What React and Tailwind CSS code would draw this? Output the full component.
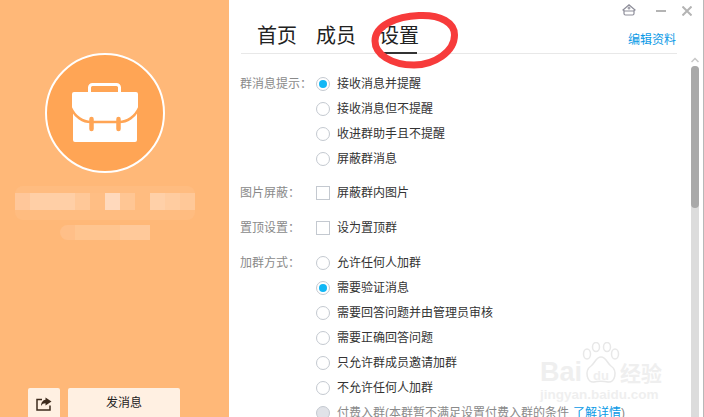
const FONT = "font-['Liberation_Sans','Noto_Sans_CJK_SC',sans-serif]";

const NAME_BLOCKS = [
  { w: "w-[15px]", bg: "bg-[#ffc79a]" },
  { w: "w-[45px]", bg: "bg-[#ffcfa6]" },
  { w: "w-[15px]", bg: "bg-[#ffc898]" },
  { w: "w-[15px]", bg: "bg-[#ffbe84]" },
  { w: "w-[15px]", bg: "bg-[#ffd9bc]" },
  { w: "w-[15px]", bg: "bg-[#ffc694]" },
  { w: "w-[15px]", bg: "bg-[#ffbc80]" },
  { w: "w-[15px]", bg: "bg-[#ffd0a8]" },
  { w: "w-[15px]", bg: "bg-[#ffcca0]" },
  { w: "w-[15px]", bg: "bg-[#ffc898]" },
];

function Radio({ checked, disabled }) {
  return (
    <span
      className={`flex h-[14px] w-[14px] shrink-0 items-center justify-center rounded-full border ${
        disabled ? "border-[#c4c9d0] bg-[#e1e3e8]" : "border-[#c4c9d0] bg-white"
      }`}
    >
      {checked && <span className="h-2 w-2 rounded-full bg-[#12b7f5]" />}
    </span>
  );
}

function Check() {
  return <span className="h-[14px] w-[14px] shrink-0 border border-[#c4c9d0] bg-white" />;
}

function Row({ label, children }) {
  return (
    <div className="flex h-[25px] items-center">
      <span className="w-[76px] shrink-0 text-[12px] text-[#8a8a8a]">{label}</span>
      {children}
    </div>
  );
}

function Option({ text, checked, box, label, disabled, link }) {
  return (
    <Row label={label}>
      {box ? <Check /> : <Radio checked={checked} disabled={disabled} />}
      <span className={`ml-[7px] whitespace-nowrap text-[12px] ${disabled ? "text-[#8a8a8a]" : "text-[#333]"}`}>
        {text}
        {link && <span className="ml-1 text-[#0a9ae6]">{link}</span>}
        {link && ")"}
      </span>
    </Row>
  );
}

function Briefcase() {
  return (
    <svg width="68" height="60" viewBox="0 0 68 60" fill="none">
      <path d="M18.500 10V4.500a3 3 0 0 1 3-3h24a3 3 0 0 1 3 3V10" stroke="white" strokeWidth="3" />
      <path d="M3 9h62a2 2 0 0 1 2 2v16l-1 2v28a2 2 0 0 1-2 2H4a2 2 0 0 1-2-2V29l-1-2V11a2 2 0 0 1 2-2Z" fill="white" />
      <path d="M0 25C4 34 12 39 20 39H48C56 39 64 34 68 25" stroke="#ffa555" strokeWidth="2.500" />
      <path d="M20.500 36v10M47.500 36v10" stroke="#ffa555" strokeWidth="4.500" strokeLinecap="round" />
    </svg>
  );
}

function Sidebar() {
  return (
    <aside className="flex h-full w-[229px] shrink-0 flex-col items-start overflow-hidden bg-[#ffb878]">
      <div className="mt-[53px] ml-[45px] flex h-[120px] w-[120px] items-center justify-center rounded-full border-2 border-white bg-[#ffa555]">
        <Briefcase />
      </div>
      {/* mosaic over the group name */}
      <div className="mt-[13px] ml-[15px] h-[34px] w-[180px] rounded-lg bg-[#ffbc80] pt-[7px]">
        <div className="flex h-[17px]">
          {NAME_BLOCKS.map((block, i) => (
            <span key={i} className={`h-full ${block.w} ${block.bg}`} />
          ))}
        </div>
      </div>
      <div className="mt-[5px] ml-[60px] flex h-[15px]">
        <span className="w-[15px] rounded-l-lg bg-[#ffbf88]" />
        <span className="w-[45px] bg-[#ffc590]" />
        <span className="w-[30px] bg-[#ffc99a]" />
      </div>
      <div className="mt-auto ml-[28px] flex gap-2">
        <button className="flex h-[29px] w-[32px] items-center justify-center rounded-t-[2px] bg-[#fff0e2] pt-[3px]">
          <svg width="16" height="14" viewBox="0 0 16 14" fill="none">
            <path d="M6 2.500H1v10.500h13V8.500" stroke="#3d2a1c" strokeWidth="1.500" />
            <path d="M9.500 0.500 15.500 4.500 9.500 8.500V6.300C7.500 6.300 6 7 5 9 5 5.500 7 3 9.500 2.700Z" fill="#3d2a1c" />
          </svg>
        </button>
        <button className="h-[29px] w-[112px] rounded-t-[2px] bg-[#fff0e2] text-[12px] text-[#222]">发消息</button>
      </div>
    </aside>
  );
}

function Tabs() {
  return (
    <div className="relative mr-[26px] ml-[12px] flex h-[54px] shrink-0 items-end border-b border-[#e8e8e8] pl-[16px]">
      <div className="flex text-[20px] leading-[36px] text-[#222]">
        <span className="h-[35px] w-[59px]">首页</span>
        <span className="h-[35px] w-[63px]">成员</span>
        <span className="-mb-px h-[36px] w-[38px] overflow-visible border-b-2 border-[#333] whitespace-nowrap">设置</span>
      </div>
      <span className="absolute top-[31px] right-[1px] text-[12px] leading-[18px] text-[#0a9ae6]">编辑资料</span>
    </div>
  );
}

function Scrollbar() {
  return (
    <div className="absolute top-[54px] right-[4px] bottom-0 w-[8px]">
      <svg className="mx-auto mt-[3px]" width="8" height="6" viewBox="0 0 8 6" fill="none">
        <path d="M0.500 5 4 1.500 7.500 5" stroke="#c8c8c8" strokeWidth="1.500" />
      </svg>
      <div className="absolute top-[12px] right-0 bottom-0 left-0 rounded-t-full bg-[#dcdcdc]">
        <div className="h-[142px] rounded-full bg-[#a9a9a9]" />
      </div>
    </div>
  );
}

function Watermark() {
  return (
    <div className="pointer-events-none absolute top-[342px] left-[311px] flex w-[128px] flex-col text-[#efefef]">
      <div className="flex h-[44px] items-end">
        <span className="text-[27px] leading-[27px] font-bold">Bai</span>
        <div className="relative h-[44px] w-[38px] shrink-0">
          <svg width="38" height="44" viewBox="0 0 38 44" fill="none" stroke="#e8e8e8" strokeWidth="1.500">
            <ellipse cx="5" cy="12" rx="3.500" ry="5" />
            <ellipse cx="14" cy="5" rx="3.500" ry="4.500" />
            <ellipse cx="25" cy="5" rx="3.500" ry="4.500" />
            <ellipse cx="33" cy="12" rx="3.500" ry="5" />
            <path d="M19 15c-5 0-6 6-10 9-7 5-4 17 3 16 3-1 10-1 14 0 7 1 10-11 3-16-4-3-5-9-10-9Z" />
          </svg>
          <span className="absolute bottom-[3px] left-[11px] text-[13px] leading-[14px] font-bold">du</span>
        </div>
        <span className="text-[21px] leading-[24px] font-bold">经验</span>
      </div>
      <span className="mt-[2px] text-[13.500px] leading-[14px] font-bold whitespace-nowrap">jingyan.baidu.com</span>
    </div>
  );
}

function WindowButtons() {
  return (
    <div className="absolute top-[3px] right-[11px] flex items-center">
      <svg width="14" height="12" viewBox="0 0 14 12" fill="none" stroke="#8d8d99" strokeWidth="1.200">
        <path d="M1 6 7 0.800 13 6 11.500 7H2.500Z" />
        <path d="M2 7v2.500a1.500 1.500 0 0 0 1.500 1.500h7a1.500 1.500 0 0 0 1.500-1.500V7M7 2.500v3M5.500 4h3" />
      </svg>
      <span className="mt-[2px] ml-[20px] h-[2px] w-[10px] bg-[#b4b4b4]" />
      <svg className="mt-[3px] ml-[16px]" width="10" height="10" viewBox="0 0 10 10" fill="none" stroke="#b4b4b4" strokeWidth="2">
        <path d="M0.500 0.500l9 9M9.500 0.500l-9 9" />
      </svg>
    </div>
  );
}

export default function App() {
  return (
    <div className={`flex h-[417px] w-[704px] overflow-hidden bg-white ${FONT}`}>
      <Sidebar />
      <main className="relative flex min-w-0 flex-1 flex-col overflow-hidden border-r border-[#b8b8b8]">
        <WindowButtons />
        <Tabs />
        <div className="flex flex-col pt-[17px] pl-[11px]">
          <Option label="群消息提示：" text="接收消息并提醒" checked />
          <Option text="接收消息但不提醒" />
          <Option text="收进群助手且不提醒" />
          <Option text="屏蔽群消息" />
          <div className="h-[9px]" />
          <Option label="图片屏蔽：" text="屏蔽群内图片" box />
          <div className="h-[10px]" />
          <Option label="置顶设置：" text="设为置顶群" box />
          <div className="h-[10px]" />
          <Option label="加群方式：" text="允许任何人加群" />
          <Option text="需要验证消息" checked />
          <Option text="需要回答问题并由管理员审核" />
          <Option text="需要正确回答问题" />
          <Option text="只允许群成员邀请加群" />
          <Option text="不允许任何人加群" />
          <Option text="付费入群(本群暂不满足设置付费入群的条件" link="了解详情" disabled />
        </div>
        <Watermark />
        <Scrollbar />
        {/* hand-drawn red circle around the tab */}
        <svg className="pointer-events-none absolute top-[10px] left-[140px]" width="95" height="62" viewBox="0 0 95 62" fill="none">
          <path
            d="M50 5.500C72 4.500 85.500 13 85.500 25 85.500 42 65 55 45 55 22 55 6 44 6 31 6 15 28 6.500 50 5.500Z"
            stroke="#f73b3b"
            strokeWidth="7"
          />
        </svg>
      </main>
    </div>
  );
}
